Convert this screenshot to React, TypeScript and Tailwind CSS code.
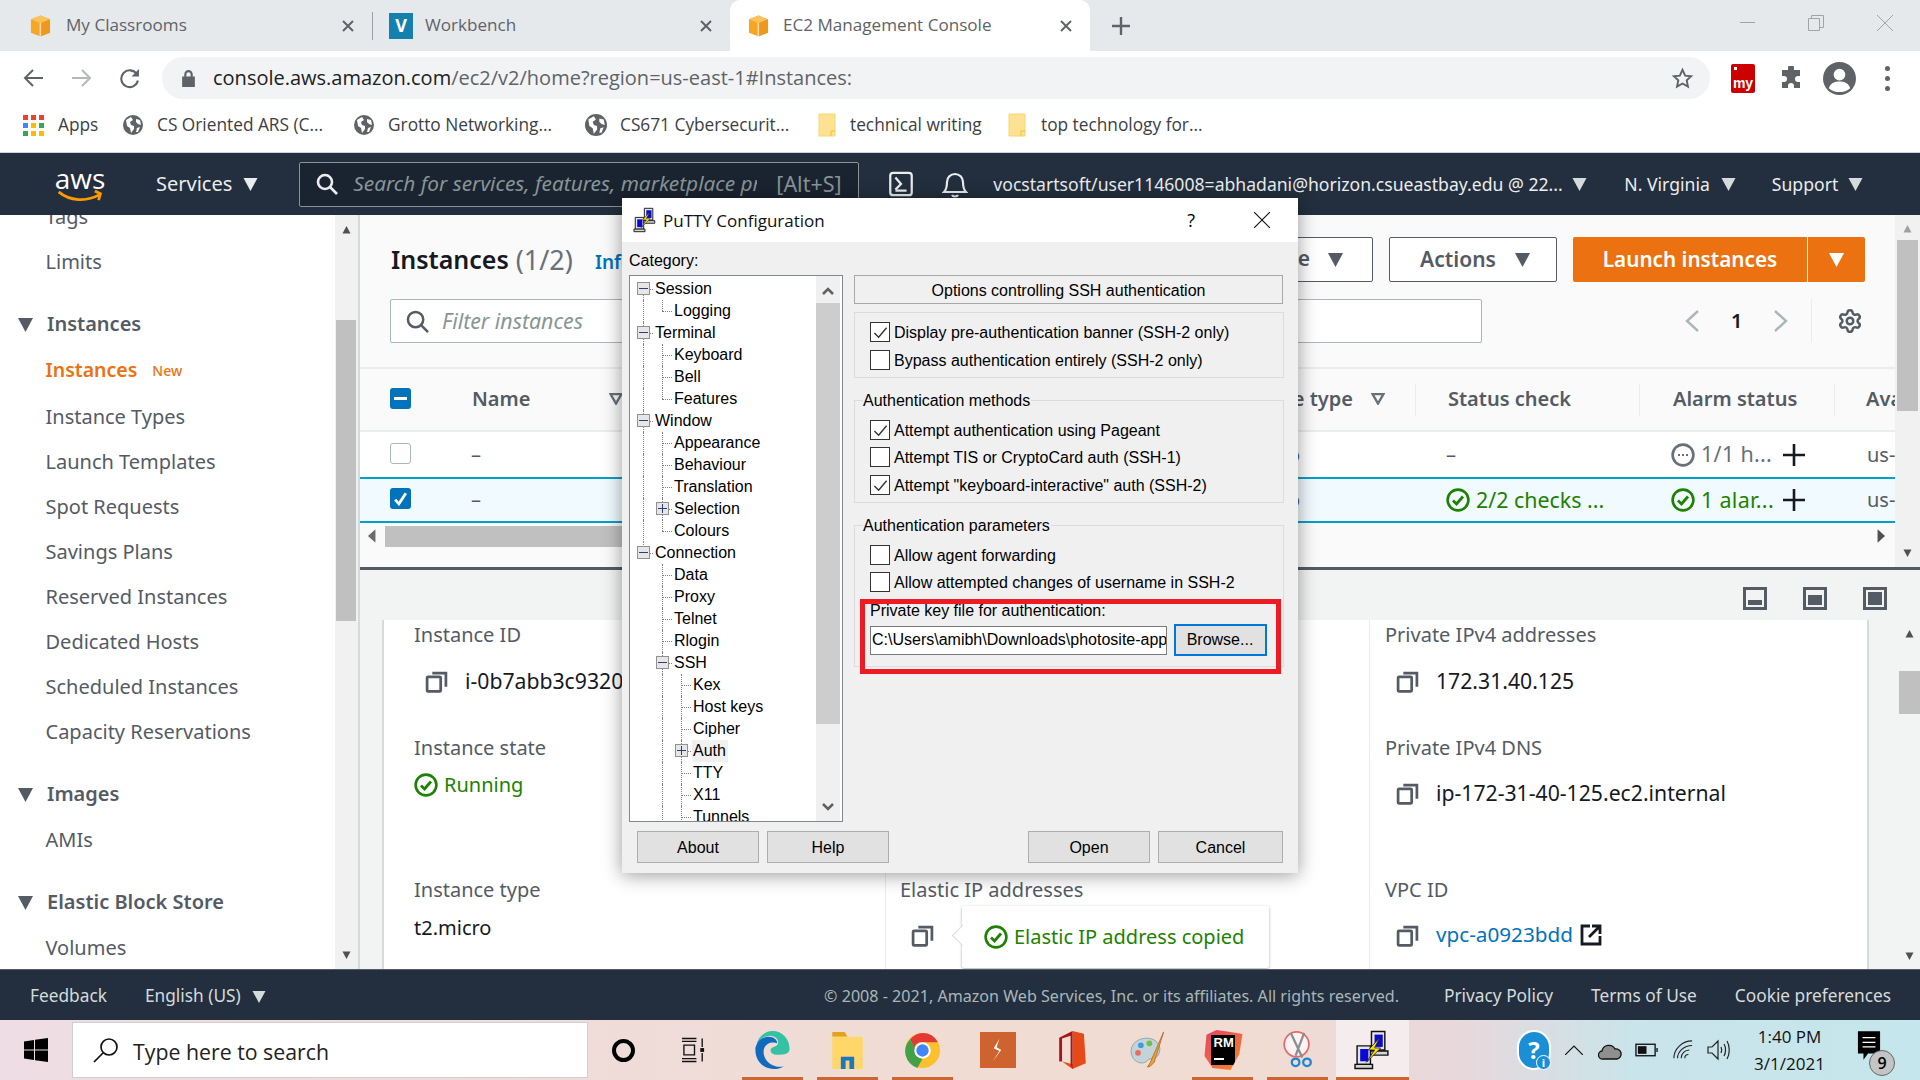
import type { ReactNode } from "react"
import { Settings } from "lucide-react"

function Caret({ className = "" }: { className?: string }) {
  return (
    <svg viewBox="0 0 14 14" className={"shrink-0 fill-current " + className}>
      <path d="M0 1h14L7 14z" />
    </svg>
  )
}

function AwsCube({ className = "" }: { className?: string }) {
  return (
    <svg viewBox="0 0 22 24" className={className}>
      <path d="M11 1 21 5v14l-10 4L1 19V5z" fill="#f5a623" />
      <path d="M11 1 21 5l-10 4L1 5z" fill="#f8c35d" />
      <path d="M11 9v14" stroke="#fff" strokeWidth="1.6" />
      <path d="M11 9 21 5v14l-10 4z" fill="#e8941a" opacity=".7" />
    </svg>
  )
}

function Globe({ className = "" }: { className?: string }) {
  return (
    <svg viewBox="0 0 20 20" className={className}>
      <circle cx="10" cy="10" r="10" fill="#5f6368" />
      <path d="M3 5l5-3 2 3-3 2 1 3 3 1 0 3-3 4-1-5-3-2zM13 4l4 1 1 5-3-1-2-2zM14 13l3-1-2 5-2 0z" fill="#fff" />
    </svg>
  )
}

function Folder({ className = "" }: { className?: string }) {
  return (
    <svg viewBox="0 0 18 24" className={className}>
      <path d="M1 1h16v22H1z" fill="#fde293" stroke="#f5d76e" />
      <path d="M13 23v-5h4" fill="none" stroke="#f1c232" />
    </svg>
  )
}

function CopyIcon({ className = "" }: { className?: string }) {
  return (
    <svg viewBox="0 0 22 22" className={"shrink-0 " + className} fill="none" stroke="#545b64" strokeWidth="2.6">
      <rect x="2" y="6.5" width="13" height="14" rx="1" />
      <path d="M7 3h13v13" />
    </svg>
  )
}

function CheckCircle({ className = "" }: { className?: string }) {
  return (
    <svg viewBox="0 0 24 24" className={"shrink-0 " + className} fill="none" stroke="#1d8102" strokeWidth="2.6">
      <circle cx="12" cy="12" r="10.4" />
      <path d="M7 12.5l3.5 3.5L17 8.5" strokeWidth="2.8" />
    </svg>
  )
}

function PlusMark() {
  return (
    <svg viewBox="0 0 22 22" className="w-[22px] h-[22px] shrink-0" stroke="#16191f" strokeWidth="2.6">
      <path d="M11 0v22M0 11h22" />
    </svg>
  )
}

function FilterCaret({ className = "" }: { className?: string }) {
  return (
    <svg viewBox="0 0 14 12" className={"w-[14px] h-[12px] shrink-0 " + className} fill="none" stroke="#687078" strokeWidth="2.4">
      <path d="M1.5 1h11L7 10.5z" />
    </svg>
  )
}

function PanelIcon({ kind }: { kind: "bottom" | "mid" | "full" }) {
  return (
    <svg viewBox="0 0 24 24" className="w-[24px] h-[24px]" fill="#545b64">
      <path d="M0 1h24v23H0zM3 4v17h18V4z" fillRule="evenodd" />
      {kind === "bottom" && <rect x="5" y="14" width="14" height="5" />}
      {kind === "mid" && <rect x="5" y="9" width="14" height="10" />}
      {kind === "full" && <rect x="5" y="6" width="14" height="13" />}
    </svg>
  )
}

function PuttyIcon({ className = "" }: { className?: string }) {
  return (
    <svg viewBox="0 0 36 40" className={className}>
      <path d="M17 2h13v18H17z" fill="#e6e6e6" stroke="#111" strokeWidth="1.4" />
      <path d="M20 5h8v12h-8z" fill="#0a0ad8" />
      <path d="M16 21h17v4H16z" fill="#d5d5d5" stroke="#111" strokeWidth="1.4" />
      <path d="M3 16h13v18H3z" fill="#e6e6e6" stroke="#111" strokeWidth="1.4" />
      <path d="M6 19h8v12H6z" fill="#0a0ad8" />
      <path d="M1 34h17v4H1z" fill="#d5d5d5" stroke="#111" strokeWidth="1.4" />
      <path d="M25 8 14 20l6 0-8 12 14-14-6 0z" fill="#f7e017" stroke="#222" strokeWidth=".8" />
    </svg>
  )
}

function Tab({ label, icon, width, active }: { label: string; icon: ReactNode; width: string; active?: boolean }) {
  return (
    <div className={`${width} h-full flex items-center shrink-0 ${active ? "bg-white rounded-t-[10px]" : ""}`}>
      {icon}
      <span className="text-[17.1px] text-[#5f6368] flex-1 -mt-[2px]">{label}</span>
      <svg viewBox="0 0 12 12" className="w-[12px] h-[12px] mr-[18px]" stroke="#5f6368" strokeWidth="2">
        <path d="M1 1l10 10M11 1 1 11" />
      </svg>
    </div>
  )
}

function Bookmark({ icon, label, width }: { icon: ReactNode; label: string; width: string }) {
  return (
    <div className={`${width} flex items-center shrink-0`}>
      {icon}
      <span className="text-[17.3px] text-[#3c4043] whitespace-nowrap">{label}</span>
    </div>
  )
}

function ChromeBar() {
  return (
    <>
      <div className="h-[51px] bg-[#e6e9ec] flex items-center font-['Open_Sans',sans-serif]">
        <Tab width="w-[372px] pl-[30px]" label="My Classrooms" icon={<AwsCube className="w-[21px] h-[24px] mr-[15px]" />} />
        <div className="w-px h-[28px] bg-[#9aa0a6] shrink-0" />
        <Tab
          width="w-[357px] pl-[16px]"
          label="Workbench"
          icon={
            <div className="w-[24px] h-[26px] bg-[#1380ad] mr-[12px] flex items-center justify-center text-white font-bold text-[18px]">V</div>
          }
        />
        <Tab width="w-[360px] pl-[18px]" active label="EC2 Management Console" icon={<AwsCube className="w-[21px] h-[24px] mr-[14px]" />} />
        <svg viewBox="0 0 18 18" className="w-[18px] h-[18px] ml-[22px]" stroke="#5f6368" strokeWidth="2.4">
          <path d="M9 0v18M0 9h18" />
        </svg>
        <div className="ml-auto flex items-center pr-[27px] -mt-[6px]">
          <div className="w-[15px] h-px bg-[#a0a4a8]" />
          <svg viewBox="0 0 16 16" className="w-[16px] h-[18px] ml-[53px]" fill="none" stroke="#a0a4a8">
            <path d="M.5 3.5h11v12H.5zM3.5 3.5v-3h12v12h-4" />
          </svg>
          <svg viewBox="0 0 16 16" className="w-[16px] h-[16px] ml-[53px]" stroke="#a0a4a8">
            <path d="M0 0l16 16M16 0 0 16" />
          </svg>
        </div>
      </div>

      <div className="h-[51px] bg-white flex items-center pt-[3px]">
        <svg viewBox="0 0 20 20" className="w-[20px] h-[20px] ml-[23px]" fill="none" stroke="#5f6368" strokeWidth="2">
          <path d="M20 10H2M10 2l-8 8 8 8" />
        </svg>
        <svg viewBox="0 0 20 20" className="w-[20px] h-[20px] ml-[29px]" fill="none" stroke="#b4b8bc" strokeWidth="2">
          <path d="M0 10h18M10 2l8 8-8 8" />
        </svg>
        <svg viewBox="0 0 20 20" className="w-[21px] h-[21px] ml-[27px]" fill="none" stroke="#5f6368" strokeWidth="2">
          <path d="M17 6a8 8 0 1 0 1 6" />
          <path d="M19 1v7h-7z" fill="#5f6368" stroke="none" />
        </svg>
        <div className="ml-[22px] w-[1548px] h-[42px] bg-[#f1f3f4] rounded-full flex items-center pl-[20px] pr-[16px]">
          <svg viewBox="0 0 12 16" className="w-[13px] h-[17px]" fill="#5f6368">
            <path d="M2 6V4a4 4 0 0 1 8 0v2h2v10H0V6zm2 0h4V4a2 2 0 0 0-4 0z" />
          </svg>
          <span className="ml-[18px] text-[20px] text-[#202124] font-['Open_Sans',sans-serif] whitespace-nowrap">
            console.aws.amazon.com<span className="text-[#5f6368]">/ec2/v2/home?region=us-east-1#Instances:</span>
          </span>
          <svg viewBox="0 0 24 24" className="w-[23px] h-[23px] ml-auto" fill="none" stroke="#5f6368" strokeWidth="2">
            <path d="M12 3l2.8 6 6.2.7-4.6 4.3 1.3 6.4L12 17.2l-5.7 3.2 1.3-6.4L3 9.7 9.2 9z" />
          </svg>
        </div>
        <div className="relative ml-[21px] w-[24px] h-[29px] bg-[#cc0000] rounded-[2px] flex items-end justify-center text-white text-[14px] font-bold leading-[20px] font-['Liberation_Sans',sans-serif]">
          <span className="absolute left-[3px] top-[3px] w-[3px] h-[3px] bg-white" />
          my
        </div>
        <svg viewBox="0 0 24 24" className="w-[24px] h-[24px] ml-[24px]" fill="#5f6368">
          <path d="M9 2a3 3 0 0 1 6 0v2h6v6h-2a3 3 0 0 0 0 6h2v6h-6v-2a3 3 0 0 0-6 0v2H3v-6h2a3 3 0 0 0 0-6H3V4h6z" />
        </svg>
        <svg viewBox="0 0 34 34" className="w-[33px] h-[33px] ml-[20px]">
          <circle cx="17" cy="17" r="17" fill="#5f6368" />
          <circle cx="17" cy="13" r="6" fill="#fff" />
          <path d="M6 27c2-6 7-7 11-7s9 1 11 7c-3 3-7 4-11 4s-8-1-11-4z" fill="#fff" />
        </svg>
        <div className="ml-[29px] flex flex-col gap-[5px]">
          <div className="w-[5px] h-[5px] rounded-full bg-[#5f6368]" />
          <div className="w-[5px] h-[5px] rounded-full bg-[#5f6368]" />
          <div className="w-[5px] h-[5px] rounded-full bg-[#5f6368]" />
        </div>
      </div>

      <div className="h-[51px] bg-white flex items-center pl-[23px] pb-[4px] font-['Open_Sans',sans-serif] border-b border-[#d0d3d6]">
        <Bookmark
          width="w-[100px]"
          label="Apps"
          icon={
            <div className="grid grid-cols-3 gap-[3px] mr-[14px]">
              {["#ea4335", "#ea4335", "#ea4335", "#4285f4", "#fbbc04", "#34a853", "#34a853", "#fbbc04", "#fbbc04"].map((c, i) => (
                <div key={i} className="w-[5px] h-[5px]" style={{ background: c }} />
              ))}
            </div>
          }
        />
        <Bookmark width="w-[231px]" label="CS Oriented ARS (C..." icon={<Globe className="w-[20px] h-[20px] mr-[14px]" />} />
        <Bookmark width="w-[231px]" label="Grotto Networking..." icon={<Globe className="w-[20px] h-[20px] mr-[14px]" />} />
        <Bookmark width="w-[233px]" label="CS671 Cybersecurit..." icon={<Globe className="w-[22px] h-[22px] mr-[13px]" />} />
        <Bookmark width="w-[190px]" label="technical writing" icon={<Folder className="w-[18px] h-[24px] mr-[14px]" />} />
        <Bookmark width="w-[200px]" label="top technology for..." icon={<Folder className="w-[18px] h-[24px] mr-[15px]" />} />
      </div>
    </>
  )
}

function AwsHeader() {
  return (
    <div className="h-[62px] bg-[#232f3e] flex items-center text-[#eaeded] text-[17.6px] font-['Noto_Sans',sans-serif] shrink-0">
      <div className="ml-[55px] w-[50px] flex flex-col items-center">
        <span className="text-[28px] leading-[24px] text-white font-['Open_Sans',sans-serif]">aws</span>
        <svg viewBox="0 0 50 14" className="w-[50px] h-[13px]" fill="none" stroke="#f90" strokeWidth="3">
          <path d="M2 2c12 10 30 11 44 3M41 1l6 3-2 7" />
        </svg>
      </div>
      <span className="ml-[51px] text-[20px]">Services</span>
      <Caret className="w-[15px] h-[14px] ml-[11px] text-[#eaeded]" />
      <div className="ml-[41px] w-[560px] h-[45px] bg-[#1a2330] border border-[#879596] rounded-[2px] flex items-center pl-[16px] text-[#879596]">
        <svg viewBox="0 0 22 22" className="w-[22px] h-[22px] shrink-0" fill="none" stroke="#eaeded" strokeWidth="2.6">
          <circle cx="9" cy="9" r="7" />
          <path d="M14 14l7 7" />
        </svg>
        <span className="ml-[15px] w-[404px] overflow-hidden whitespace-nowrap italic text-[20.8px]">Search for services, features, marketplace products, and docs</span>
        <span className="ml-[19px] text-[21.5px]">[Alt+S]</span>
      </div>
      <svg viewBox="0 0 26 30" className="w-[26px] h-[28px] ml-[29px]" fill="none" stroke="#eaeded" strokeWidth="2.4">
        <rect x="1.5" y="3" width="23" height="24" rx="3" />
        <path d="M7 8l6 7-6 6M7 22h12" />
      </svg>
      <svg viewBox="0 0 26 28" className="w-[26px] h-[28px] ml-[28px]" fill="none" stroke="#eaeded" strokeWidth="2.2">
        <path d="M2 22c3-3 3-6 3-10a8 8 0 0 1 16 0c0 4 0 7 3 10z" />
        <path d="M10 25c1 2 5 2 6 0" />
      </svg>
      <span className="ml-[25px] whitespace-nowrap w-[569px]">vocstartsoft/user1146008=abhadani@horizon.csueastbay.edu @ 22...</span>
      <Caret className="w-[15px] h-[14px] ml-[10px] text-[#d5dbdb]" />
      <span className="ml-[37px]">N. Virginia</span>
      <Caret className="w-[15px] h-[14px] ml-[11px] text-[#d5dbdb]" />
      <span className="ml-[36px]">Support</span>
      <Caret className="w-[15px] h-[14px] ml-[10px] text-[#d5dbdb]" />
    </div>
  )
}

function SideItem({ children, className = "h-[45px]" }: { children: ReactNode; className?: string }) {
  return <div className={"flex items-center pl-[45.5px] text-[20px] text-[#545b64] whitespace-nowrap " + className}>{children}</div>
}

function SideHead({ children }: { children: ReactNode }) {
  return (
    <div className="mt-[17px] h-[46px] flex items-center pl-[18px] text-[20px] font-semibold text-[#545b64]">
      <Caret className="w-[15px] h-[15px] mr-[14px] text-[#545b64]" />
      {children}
    </div>
  )
}

function Sidebar() {
  return (
    <div className="w-[360px] h-full shrink-0 flex bg-white overflow-hidden">
      <div className="w-[335px] h-full -mt-[21px]">
        <SideItem>Tags</SideItem>
        <SideItem>Limits</SideItem>
        <SideHead>Instances</SideHead>
        <SideItem className="h-[47px]">
          <span className="text-[#ec7211] font-semibold text-[19.5px] -mt-[1px]">Instances</span>
          <span className="ml-[15px] text-[#ec7211] text-[14px] font-medium">New</span>
        </SideItem>
        <SideItem>Instance Types</SideItem>
        <SideItem>Launch Templates</SideItem>
        <SideItem>Spot Requests</SideItem>
        <SideItem>Savings Plans</SideItem>
        <SideItem>Reserved Instances</SideItem>
        <SideItem>Dedicated Hosts</SideItem>
        <SideItem>Scheduled Instances</SideItem>
        <SideItem>Capacity Reservations</SideItem>
        <SideHead>Images</SideHead>
        <SideItem>AMIs</SideItem>
        <SideHead>Elastic Block Store</SideHead>
        <SideItem>Volumes</SideItem>
      </div>
      <div className="w-[25px] h-[754px] bg-[#f1f1f1] border-r-2 border-[#d5dbdb] flex flex-col items-center pt-[11px] pr-[1px]">
        <Caret className="w-[11px] h-[8px] rotate-180 text-[#505050]" />
        <div className="w-[20px] h-[301px] bg-[#c0c0c0] mt-[86px]" />
        <Caret className="w-[11px] h-[8px] mt-auto mb-[10px] text-[#505050]" />
      </div>
    </div>
  )
}

function TableHeadCell({ children, className = "" }: { children: ReactNode; className?: string }) {
  return <div className={"h-[32px] flex items-center text-[20px] font-semibold text-[#545b64] border-r border-[#eaeded] shrink-0 pb-[2px] " + className}>{children}</div>
}

function TopPane() {
  return (
    <div className="h-[352px] flex bg-[#fafafa] shrink-0">
      <div className="w-[1535px] h-full overflow-hidden">
        <div className="h-[84px] flex items-center pl-[31px] pt-[4px]">
          <span className="text-[25px] font-semibold text-[#16191f] mt-[2px]">Instances</span>
          <span className="text-[27px] text-[#687078] ml-[7px] mt-[2px]">(1/2)</span>
          <span className="text-[19px] font-semibold text-[#0073bb] ml-[22px] mt-[6px]">Info</span>
          <div className="ml-auto w-[190px] h-[45px] mr-[16px] border border-[#545b64] rounded-[2px] bg-white flex items-center justify-end pr-[29px] text-[21px] font-semibold text-[#545b64] whitespace-nowrap">
            Instance state
            <Caret className="w-[15px] h-[15px] ml-[18px] text-[#545b64]" />
          </div>
          <div className="w-[168px] h-[45px] mr-[16px] pl-[4px] pt-[1px] border border-[#545b64] rounded-[2px] bg-white flex items-center justify-center text-[21px] font-semibold text-[#545b64]">
            Actions
            <Caret className="w-[15px] h-[15px] ml-[19px] text-[#545b64]" />
          </div>
          <div className="w-[292px] h-[45px] mr-[30px] rounded-[2px] bg-[#ec7211] flex items-center text-[20.7px] font-semibold text-white">
            <span className="w-[235px] text-center border-r border-white leading-[45px]">Launch instances</span>
            <Caret className="w-[15px] h-[15px] ml-[21px] text-white" />
          </div>
        </div>
        <div className="h-[44px] flex items-center pl-[30px]">
          <div className="w-[1092px] h-[44px] bg-white border border-[#aab7b8] rounded-[2px] flex items-center pl-[15px]">
            <svg viewBox="0 0 24 24" className="w-[23px] h-[23px]" fill="none" stroke="#545b64" strokeWidth="2.6">
              <circle cx="10" cy="10" r="8" />
              <path d="M16 16l7 7" />
            </svg>
            <span className="ml-[13px] text-[21.3px] italic text-[#879596]">Filter instances</span>
          </div>
          <svg viewBox="0 0 14 22" className="w-[14px] h-[22px] ml-[203px]" fill="none" stroke="#aab7b8" strokeWidth="2.4">
            <path d="M13 1 2 11l11 10" />
          </svg>
          <span className="ml-[32px] text-[20px] font-semibold text-[#16191f]">1</span>
          <svg viewBox="0 0 14 22" className="w-[14px] h-[22px] ml-[32px]" fill="none" stroke="#aab7b8" strokeWidth="2.4">
            <path d="M1 1l11 10L1 21" />
          </svg>
          <div className="w-px h-[44px] bg-[#eaeded] ml-[23px]" />
          <Settings className="w-[26px] h-[26px] ml-[25px] text-[#545b64]" strokeWidth={2.3} />
        </div>
        <div className="mt-[24px] h-[65px] border-t-2 border-b-2 border-[#eaeded] flex items-center">
          <div className="w-[81px] shrink-0 pl-[30px] pb-[2px]">
            <div className="w-[21px] h-[21px] bg-[#0073bb] rounded-[3px] flex items-center justify-center">
              <div className="w-[13px] h-[3px] bg-white" />
            </div>
          </div>
          <div className="w-px h-[32px] bg-[#eaeded] -ml-px" />
          <TableHeadCell className="w-[199px] pl-[32px] border-none">
            Name
            <FilterCaret className="ml-[79px]" />
          </TableHeadCell>
          <TableHeadCell className="w-[777px] justify-end pr-[30px]">
            Instance type
            <FilterCaret className="ml-[18px]" />
          </TableHeadCell>
          <TableHeadCell className="w-[224px] pl-[32px]">Status check</TableHeadCell>
          <TableHeadCell className="w-[195px] pl-[33px]">Alarm status</TableHeadCell>
          <TableHeadCell className="pl-[31px] border-none">Availability Zone</TableHeadCell>
        </div>
        <div className="h-[45px] bg-white flex items-center text-[20px] text-[#545b64] whitespace-nowrap">
          <div className="w-[81px] shrink-0 pl-[30px] pb-[2px]">
            <div className="w-[21px] h-[21px] border border-[#aab7b8] rounded-[3px] bg-white" />
          </div>
          <span className="w-[200px] shrink-0 pl-[30px]">–</span>
          <span className="w-[776px] shrink-0 pr-[117px] text-right">t2.micro</span>
          <span className="w-[224px] shrink-0 pl-[29px]">–</span>
          <div className="w-[195px] shrink-0 pl-[30px] flex items-center">
            <svg viewBox="0 0 24 24" className="w-[24px] h-[24px] shrink-0" fill="none" stroke="#687078" strokeWidth="2.6">
              <circle cx="12" cy="12" r="10.4" />
              <path d="M7 12h10" strokeDasharray="2 2" strokeWidth="2.2" />
            </svg>
            <span className="ml-[6px] w-[82px] text-[#687078] text-[21.5px] tracking-[0.3px]">1/1 h...</span>
            <PlusMark />
          </div>
          <span className="pl-[31px]">us-east-1a</span>
        </div>
        <div className="h-[46px] bg-[#f1faff] border-y-2 border-[#00a1c9] flex items-center text-[20px] text-[#545b64] whitespace-nowrap">
          <div className="w-[81px] shrink-0 pl-[30px] pb-[3px]">
            <div className="w-[21px] h-[21px] bg-[#0073bb] rounded-[3px] flex items-center justify-center">
              <svg viewBox="0 0 14 14" className="w-[15px] h-[15px]" fill="none" stroke="#fff" strokeWidth="2.6">
                <path d="M2 8l3.5 4L12 2" />
              </svg>
            </div>
          </div>
          <span className="w-[200px] shrink-0 pl-[30px]">–</span>
          <span className="w-[776px] shrink-0 pr-[117px] text-right">t2.micro</span>
          <div className="w-[224px] shrink-0 pl-[29px] flex items-center text-[#1d8102]">
            <CheckCircle className="w-[24px] h-[24px]" />
            <span className="ml-[6px] text-[21.4px]">2/2 checks ...</span>
          </div>
          <div className="w-[195px] shrink-0 pl-[30px] flex items-center text-[#1d8102]">
            <CheckCircle className="w-[24px] h-[24px]" />
            <span className="ml-[6px] w-[82px] text-[21.5px] tracking-[0.3px]">1 alar...</span>
            <PlusMark />
          </div>
          <span className="pl-[31px]">us-east-1a</span>
        </div>
        <div className="h-[22px] mt-[2px] flex items-center">
          <Caret className="w-[8px] h-[14px] ml-[8px] text-[#6c6c6c] rotate-90 scale-x-[1.7]" />
          <div className="w-[700px] h-[21px] ml-[9px] bg-[#c0c0c0]" />
          <Caret className="w-[8px] h-[14px] ml-auto mr-[10px] text-[#505050] -rotate-90 scale-x-[1.7]" />
        </div>
      </div>
      <div className="w-[25px] h-full bg-[#f1f1f1] flex flex-col items-center pt-[10px]">
        <Caret className="w-[11px] h-[8px] rotate-180 text-[#a0a0a0]" />
        <div className="w-[21px] h-[171px] bg-[#c0c0c0] mt-[7px]" />
        <Caret className="w-[11px] h-[8px] mt-auto mb-[10px] text-[#505050]" />
      </div>
    </div>
  )
}

function Label({ children }: { children: ReactNode }) {
  return <div className="h-[30px] flex items-center text-[20px] text-[#545b64] whitespace-nowrap">{children}</div>
}

function CopyValue({ children }: { children: ReactNode }) {
  return (
    <div className="flex items-center h-[30px] pl-[11px] text-[21.2px] text-[#16191f] whitespace-nowrap">
      <CopyIcon className="w-[23px] h-[23px] mr-[17px]" />
      {children}
    </div>
  )
}

function DetailPane() {
  return (
    <div className="flex-1 min-h-0 bg-[#f2f3f3] border-t-[3px] border-[#545b64] flex flex-col">
      <div className="h-[50px] flex items-start justify-end pt-[16px] pr-[33px] gap-[36px] shrink-0">
        <PanelIcon kind="bottom" />
        <PanelIcon kind="mid" />
        <PanelIcon kind="full" />
      </div>
      <div className="flex-1 min-h-0 pl-[22px] flex">
        <div className="w-[1491px] h-full bg-white border-x-2 border-[#d5dbdb] grid grid-cols-[501px_484px_1fr]">
          <div className="pl-[30px]">
            <Label>Instance ID</Label>
            <div className="mt-[16px]">
              <CopyValue>i-0b7abb3c93201f2c4</CopyValue>
            </div>
            <div className="mt-[37px]">
              <Label>Instance state</Label>
            </div>
            <div className="mt-[7px] flex items-center h-[30px] text-[20px] text-[#1d8102]">
              <CheckCircle className="w-[24px] h-[24px] mr-[6px]" />
              Running
            </div>
            <div className="mt-[75px]">
              <Label>Instance type</Label>
            </div>
            <div className="mt-[8px] h-[30px] flex items-center text-[20px] text-[#16191f]">t2.micro</div>
          </div>
          <div className="border-l border-[#eaeded] pl-[14px] pt-[255px] relative">
            <Label>Elastic IP addresses</Label>
            <div className="mt-[15px]">
              <CopyValue>
                <span />
              </CopyValue>
            </div>
            {/* copied popover */}
            <div className="absolute left-[76px] top-[286px] w-[307px] h-[62px] bg-white rounded-[2px] shadow-[0_1px_3px_rgba(0,0,0,0.35)] flex items-center pl-[22px] text-[20px] text-[#1d8102] whitespace-nowrap">
              <div className="absolute -left-[7px] top-[22px] w-[15px] h-[15px] bg-white rotate-45 border-l border-b border-[#d5dbdb]" />
              <CheckCircle className="w-[24px] h-[24px] mr-[6px] relative" />
              Elastic IP address copied
            </div>
          </div>
          <div className="border-l border-[#eaeded] pl-[15px]">
            <Label>Private IPv4 addresses</Label>
            <div className="mt-[16px]">
              <CopyValue>172.31.40.125</CopyValue>
            </div>
            <div className="mt-[37px]">
              <Label>Private IPv4 DNS</Label>
            </div>
            <div className="mt-[15px]">
              <CopyValue>ip-172-31-40-125.ec2.internal</CopyValue>
            </div>
            <div className="mt-[67px]">
              <Label>VPC ID</Label>
            </div>
            <div className="mt-[15px]">
              <CopyValue>
                <span className="text-[#0073bb] text-[20.7px]">vpc-a0923bdd</span>
                <svg viewBox="0 0 22 22" className="w-[22px] h-[22px] ml-[7px]" fill="none" stroke="#16191f" strokeWidth="2.8">
                  <path d="M10 2H2v18h18v-8M9 13 19 3M12 2h8v8" />
                </svg>
              </CopyValue>
            </div>
          </div>
        </div>
        <div className="flex-1 flex flex-col items-center pl-[30px] pt-[10px]">
          <Caret className="w-[11px] h-[8px] rotate-180 text-[#505050]" />
          <div className="w-[21px] h-[43px] bg-[#c0c0c0] mt-[33px]" />
          <Caret className="w-[11px] h-[8px] mt-auto mb-[9px] text-[#505050]" />
        </div>
      </div>
    </div>
  )
}

function AwsFooter() {
  return (
    <div className="h-[51px] bg-[#232f3e] border-t border-[#545b64] flex items-center pt-[2px] text-[17.3px] text-[#d5dbdb] font-['Noto_Sans',sans-serif] shrink-0 whitespace-nowrap">
      <span className="ml-[30px]">Feedback</span>
      <span className="ml-[38px]">English (US)</span>
      <Caret className="w-[14px] h-[13px] ml-[11px]" />
      <span className="ml-auto text-[#aab7b8] text-[16.1px]">© 2008 - 2021, Amazon Web Services, Inc. or its affiliates. All rights reserved.</span>
      <span className="ml-[45px]">Privacy Policy</span>
      <span className="ml-[38px]">Terms of Use</span>
      <span className="ml-[38px] mr-[29px]">Cookie preferences</span>
    </div>
  )
}

// tree rows: label, ancestor guide lines, expander
type TreeNode = {
  label: string
  guides: boolean[]
  exp?: "minus" | "plus"
  end?: boolean
  first?: boolean
  selected?: boolean
}

const treeNodes: TreeNode[] = [
  { label: "Session", guides: [], exp: "minus", first: true },
  { label: "Logging", guides: [true], end: true },
  { label: "Terminal", guides: [], exp: "minus" },
  { label: "Keyboard", guides: [true] },
  { label: "Bell", guides: [true] },
  { label: "Features", guides: [true], end: true },
  { label: "Window", guides: [], exp: "minus" },
  { label: "Appearance", guides: [true] },
  { label: "Behaviour", guides: [true] },
  { label: "Translation", guides: [true] },
  { label: "Selection", guides: [true], exp: "plus" },
  { label: "Colours", guides: [true], end: true },
  { label: "Connection", guides: [], exp: "minus", end: true },
  { label: "Data", guides: [false] },
  { label: "Proxy", guides: [false] },
  { label: "Telnet", guides: [false] },
  { label: "Rlogin", guides: [false] },
  { label: "SSH", guides: [false], exp: "minus" },
  { label: "Kex", guides: [false, true] },
  { label: "Host keys", guides: [false, true] },
  { label: "Cipher", guides: [false, true] },
  { label: "Auth", guides: [false, true], exp: "plus", selected: true },
  { label: "TTY", guides: [false, true] },
  { label: "X11", guides: [false, true] },
  { label: "Tunnels", guides: [false, true] },
]

function TreeRow({ node }: { node: TreeNode }) {
  return (
    <div className="h-[22px] flex items-center pl-[13px] shrink-0">
      {node.guides.map((g, i) => (
        <span key={i} className={`w-[19px] h-full shrink-0 ${g ? "border-l border-dotted border-[#808080]" : ""}`} />
      ))}
      <span className="relative w-[12px] h-full shrink-0">
        <span
          className={`absolute left-0 border-l border-dotted border-[#808080] ${
            node.first ? "top-1/2 bottom-0" : node.end ? "top-0 h-1/2" : "inset-y-0"
          }`}
        />
        <span className="absolute left-0 top-1/2 w-[10px] border-t border-dotted border-[#808080]" />
        {node.exp && (
          <span className="absolute -left-[6px] top-[4px] w-[13px] h-[13px] bg-[#e6e6e6] border border-[#919191] flex items-center justify-center">
            <span className="w-[9px] h-px bg-[#2b3f73]" />
            {node.exp === "plus" && <span className="absolute w-px h-[9px] bg-[#2b3f73]" />}
          </span>
        )}
      </span>
      <span className={`text-[16px] text-black leading-[22px] ${node.selected ? "bg-[#f0f0f0] -ml-px pl-px pr-[2px]" : ""}`}>{node.label}</span>
    </div>
  )
}

function Check({ label, checked }: { label: string; checked?: boolean }) {
  return (
    <div className="flex items-center h-[20px] pl-[15px] whitespace-nowrap">
      <span className="w-[20px] h-[20px] bg-white border border-[#333] flex items-center justify-center shrink-0">
        {checked && (
          <svg viewBox="0 0 16 16" className="w-[15px] h-[15px]" fill="none" stroke="#333" strokeWidth="1.5">
            <path d="M1.5 8.5 6 13 14.5 3" />
          </svg>
        )}
      </span>
      <span className="ml-[4px] mt-[2px]">{label}</span>
    </div>
  )
}

function GroupBox({ label, className, children }: { label?: string; className: string; children: ReactNode }) {
  return (
    <div className={"relative border border-[#dcdcdc] w-[430px] " + className}>
      {label && <span className="absolute left-[8px] -top-[10px] h-[20px] leading-[20px] bg-[#f0f0f0] pr-[1px]">{label}</span>}
      {children}
    </div>
  )
}

function WinButton({ label, className }: { label: string; className: string }) {
  return <div className={"h-[32px] bg-[#e1e1e1] border border-[#adadad] flex items-center justify-center shrink-0 pt-[2px] " + className}>{label}</div>
}

function PuttyDialog() {
  return (
    <div className="absolute left-[622px] top-[198px] w-[676px] h-[675px] bg-[#f0f0f0] shadow-[0_2px_18px_rgba(0,0,0,0.4)] flex flex-col font-['Liberation_Sans',sans-serif] text-[16px] text-black">
      <div className="h-[44px] bg-white flex items-center shrink-0 pl-[11px]">
        <PuttyIcon className="w-[24px] h-[26px]" />
        <span className="ml-[6px] mt-[1px] text-[17px] font-['Open_Sans',sans-serif] text-[#111]">PuTTY Configuration</span>
        <span className="ml-auto text-[18px] font-['Open_Sans',sans-serif]">?</span>
        <svg viewBox="0 0 16 16" className="w-[16px] h-[16px] ml-[59px] mr-[28px]" stroke="#111" strokeWidth="1.1">
          <path d="M0 0l16 16M16 0 0 16" />
        </svg>
      </div>

      <div className="h-[580px] flex shrink-0">
        <div className="w-[232px] pl-[7px] shrink-0">
          <div className="h-[33px] flex items-center pt-[5px]">Category:</div>
          <div className="w-[214px] h-[547px] bg-white border border-[#828790] flex overflow-hidden">
            <div className="w-[186px] h-full overflow-hidden pt-[2px] flex flex-col shrink-0">
              {treeNodes.map((n) => (
                <TreeRow key={n.label} node={n} />
              ))}
            </div>
            <div className="w-[24px] h-full bg-[#f0f0f0] flex flex-col items-center pt-[11px]">
              <svg viewBox="0 0 12 8" className="w-[12px] h-[8px]" fill="none" stroke="#606060" strokeWidth="2.5">
                <path d="M1 7l5-5 5 5" />
              </svg>
              <div className="w-full h-[421px] bg-[#cdcdcd] mt-[8px]" />
              <svg viewBox="0 0 12 8" className="w-[12px] h-[8px] mt-auto mb-[10px]" fill="none" stroke="#606060" strokeWidth="2.5">
                <path d="M1 1l5 5 5-5" />
              </svg>
            </div>
          </div>
        </div>
        <div className="relative pt-[33px] flex flex-col">
          <div className="w-[429px] h-[29px] border border-[#a8a8a8] flex items-center justify-center pt-[2px]">Options controlling SSH authentication</div>
          <GroupBox className="mt-[8px] h-[66px] pt-[9px] flex flex-col gap-[8px]">
            <Check checked label="Display pre-authentication banner (SSH-2 only)" />
            <Check label="Bypass authentication entirely (SSH-2 only)" />
          </GroupBox>
          <GroupBox label="Authentication methods" className="mt-[22px] h-[103px] pt-[19px] flex flex-col gap-[7px]">
            <Check checked label="Attempt authentication using Pageant" />
            <Check label="Attempt TIS or CryptoCard auth (SSH-1)" />
            <div className="mt-[1px]">
              <Check checked label={'Attempt "keyboard-interactive" auth (SSH-2)'} />
            </div>
          </GroupBox>
          <GroupBox label="Authentication parameters" className="mt-[22px] h-[142px] pt-[19px] flex flex-col gap-[7px]">
            <Check label="Allow agent forwarding" />
            <Check label="Allow attempted changes of username in SSH-2" />
            <div className="pl-[15px] mt-[2px] h-[20px] leading-[20px] whitespace-nowrap">Private key file for authentication:</div>
            <div className="pl-[15px] -mt-[4px] flex items-center">
              <div className="w-[297px] h-[29px] bg-white border border-[#7a7a7a] pl-[1px] pr-[3px] leading-[26px] overflow-hidden whitespace-nowrap shrink-0">C:\Users\amibh\Downloads\photosite-app.ppk</div>
              <div className="ml-[7px] w-[93px] h-[32px] bg-[#e1e1e1] border-2 border-[#0078d7] flex items-center justify-center pr-[1px]">Browse...</div>
            </div>
          </GroupBox>
          {/* red annotation from the screenshot */}
          <div className="absolute left-[6px] top-[357px] w-[421px] h-[75px] border-[5px] border-[#ed1c24]" />
        </div>
      </div>

      <div className="mt-[9px] pl-[15px] flex">
        <WinButton label="About" className="w-[122px]" />
        <WinButton label="Help" className="w-[122px] ml-[8px]" />
        <WinButton label="Open" className="w-[122px] ml-[139px]" />
        <WinButton label="Cancel" className="w-[125px] ml-[8px]" />
      </div>
    </div>
  )
}

function Slot({ children, active, running }: { children: ReactNode; active?: boolean; running?: boolean }) {
  return (
    <div className={`h-full flex items-center justify-center shrink-0 relative ${active ? "w-[73px] bg-[#f5eded] -ml-[6px]" : "w-[61px]"}`}>
      {children}
      {running && <div className="absolute bottom-0 inset-x-0 h-[3px] bg-[#cc6530]" />}
    </div>
  )
}

function Taskbar() {
  return (
    <div className="h-[60px] shrink-0 flex items-stretch bg-[linear-gradient(90deg,#eedde4_0%,#f0dcd3_50%,#f0dcd3_66%,#e8d8dc_76%,#c9e4ea_85%,#c5e6ec_100%)] font-['Open_Sans',sans-serif]">
      <div className="w-[72px] flex items-center justify-center shrink-0">
        <svg viewBox="0 0 24 24" className="w-[24px] h-[24px]" fill="#000">
          <path d="M0 3.5 10 2v9.500H0zM11 1.800 24 0v11.500H11zM0 12.500h10V22L0 20.500zM11 12.500h13V24l-13-1.800z" />
        </svg>
      </div>
      <div className="w-[516px] my-[2px] bg-white border border-[#cfcfcf] flex items-center pl-[20px] shrink-0">
        <svg viewBox="0 0 26 26" className="w-[26px] h-[26px]" fill="none" stroke="#111" strokeWidth="1.7">
          <circle cx="16" cy="10" r="8" />
          <path d="M10 16 1 25" />
        </svg>
        <span className="ml-[14px] mt-[3px] text-[21.3px] text-[#222]">Type here to search</span>
      </div>
      <div className="ml-[24px] w-[24px] flex items-center shrink-0">
        <div className="w-[23px] h-[23px] rounded-full border-[4px] border-black" />
      </div>
      <div className="ml-[46px] w-[28px] flex items-center shrink-0">
        <svg viewBox="0 0 26 28" className="w-[25px] h-[28px]" fill="none" stroke="#111" strokeWidth="1.4">
          <path d="M0 2h15M0 5h15M0 23h15M0 26h15M2 9h11v10H2zM21 2v9M21 17v9" />
          <rect x="19" y="12" width="4" height="4" fill="#111" stroke="none" />
        </svg>
      </div>
      <div className="ml-[32px] flex gap-[14px] items-stretch">
        <Slot running>
          <svg viewBox="0 0 36 40" className="w-[37px] h-[38px]">
            <path d="M18 0c10 0 18 8 18 19 0 5-6 6-12 6-6 0-8-2-8-5 0-4 8-3 8-8 0-4-4-7-9-7S3 9 1 15C3 6 10 0 18 0z" fill="#35c1a3" />
            <path d="M1 15C3 9 9 6 14 6s9 3 9 7c-4-2-12-1-14 6-2 8 4 16 12 18 3 1 6 1 9 0-3 2-7 3-11 3C8 40 0 31 0 20c0-2 0-3 1-5z" fill="#0f6bbd" />
          </svg>
        </Slot>
        <Slot running>
          <svg viewBox="0 0 34 40" className="w-[33px] h-[38px]">
            <path d="M1 1h13l3 5H1z" fill="#e3a21a" />
            <path d="M1 6h32v34H1z" fill="#ffd668" />
            <path d="M10 40V27h14v13h-5V31h-4v9z" fill="#1976c8" />
          </svg>
        </Slot>
        <Slot running>
          <svg viewBox="0 0 34 34" className="w-[35px] h-[35px]">
            <circle cx="17" cy="17" r="17" fill="#fbc02d" />
            <path d="M17 0a17 17 0 0 1 15 9H17a8 8 0 0 0-8 5L5 6a17 17 0 0 1 12-6z" fill="#e53935" />
            <path d="M5 6l8 15 4 4-5 9A17 17 0 0 1 5 6z" fill="#43a047" />
            <circle cx="17" cy="17" r="8" fill="#fff" />
            <circle cx="17" cy="17" r="6" fill="#4285f4" />
          </svg>
        </Slot>
        <Slot>
          <div className="w-[36px] h-[36px] bg-[#cf6330] flex items-center justify-center">
            <svg viewBox="0 0 14 24" className="w-[13px] h-[24px]" fill="#fff">
              <path d="M9 0 3 10l6 3-7 11 9-12-5-3z" />
            </svg>
          </div>
        </Slot>
        <Slot>
          <svg viewBox="0 0 28 40" className="w-[27px] h-[38px]">
            <path d="M14 0 26 3 28 34 14 40 3 32 14 35z" fill="#e64a19" />
            <path d="M14 0 0 7v25l3 0 0-24 9-3 0 30 2 5 0-40z" fill="#a4161a" />
          </svg>
        </Slot>
        <Slot>
          <svg viewBox="0 0 38 40" className="w-[37px] h-[38px]">
            <path d="M2 24C0 12 12 6 22 8c8 2 12 8 9 16-3 7-8 3-12 7-4 5-15 3-17-7z" fill="#c3d3da" stroke="#8fa3ad" />
            <circle cx="12" cy="15" r="3" fill="#3f9ddc" />
            <circle cx="21" cy="13" r="3" fill="#6fbf4a" />
            <circle cx="9" cy="23" r="3" fill="#e96a5f" />
            <path d="M36 1 22 33l-3 5 3-1 4-4z" fill="#e9a23b" stroke="#b9722a" />
          </svg>
        </Slot>
        <Slot running>
          <div className="relative w-[40px] h-[40px] bg-[linear-gradient(135deg,#e83e6d,#f58a1f)] [clip-path:polygon(10%_12%,35%_0,70%_5%,100%_10%,92%_60%,70%_100%,25%_95%,5%_65%)] flex items-center justify-center">
            <div className="w-[24px] h-[30px] bg-black text-white text-[13px] font-bold leading-[16px] pl-[3px] font-['Liberation_Sans',sans-serif]">
              RM
              <div className="w-[10px] h-[2px] bg-white mt-[7px]" />
            </div>
          </div>
        </Slot>
        <Slot running>
          <svg viewBox="0 0 38 40" className="w-[37px] h-[38px]" fill="none">
            <circle cx="18" cy="14" r="13" stroke="#e66a6a" strokeWidth="1.8" fill="#fdf3f3" />
            <path d="M12 2 24 28M26 2 17 26" stroke="#8a8f95" strokeWidth="2.4" />
            <circle cx="17" cy="33" r="4" stroke="#1c86d1" strokeWidth="2.4" />
            <circle cx="29" cy="33" r="4" stroke="#1c86d1" strokeWidth="2.4" />
          </svg>
        </Slot>
        <Slot active running>
          <PuttyIcon className="w-[37px] h-[42px]" />
        </Slot>
      </div>
      <div className="ml-[108px] w-[34px] flex items-center shrink-0">
        <div className="relative w-[34px] h-[40px] rounded-full bg-white flex items-center justify-center">
          <div className="w-[30px] h-[36px] rounded-full bg-[#1a8fd6] text-white text-[24px] font-bold flex items-center justify-center">?</div>
          <div className="absolute right-0 bottom-0 w-[15px] h-[15px] rounded-full bg-[#1a8fd6] border border-white text-white text-[11px] font-bold leading-[13px] text-center">i</div>
        </div>
      </div>
      <div className="flex items-center ml-[14px] shrink-0">
        <svg viewBox="0 0 18 10" className="w-[18px] h-[10px]" fill="none" stroke="#111" strokeWidth="1.2">
          <path d="M0 10 9 1l9 9" />
        </svg>
        <svg viewBox="0 0 24 20" className="w-[24px] h-[20px] ml-[15px]" fill="#8f8f8f" stroke="#111" strokeWidth="1.3">
          <path d="M5 19a4 4 0 0 1-1-8 7 7 0 0 1 13-2 5 5 0 0 1 2 10z" />
        </svg>
        <svg viewBox="0 0 24 14" className="w-[23px] h-[14px] ml-[13px]" fill="none" stroke="#111" strokeWidth="1.4">
          <rect x="1" y="1" width="20" height="12" />
          <rect x="3" y="3" width="9" height="8" fill="#111" stroke="none" />
          <path d="M23 5v4" />
        </svg>
        <svg viewBox="0 0 22 22" className="w-[20px] h-[20px] ml-[15px]" fill="none" stroke="#222" strokeWidth="1.2">
          <path d="M1 20C1 10 10 1 21 1M5 20C5 13 12 6 21 6M9 20c0-5 4-9 9-9M13 20c0-2 1-4 4-4" />
        </svg>
        <svg viewBox="0 0 24 24" className="w-[24px] h-[24px] ml-[13px]" fill="none" stroke="#222" strokeWidth="1.2">
          <path d="M2 9v6h4l6 6V3L6 9zM15 9c1 2 1 4 0 6M18 6c2 3 2 9 0 12M21 3c3 5 3 13 0 18" />
        </svg>
      </div>
      <div className="ml-[23px] w-[73px] flex flex-col justify-center items-center gap-[9px] text-[17px] leading-[18px] text-[#111] shrink-0">
        <span>1:40 PM</span>
        <span>3/1/2021</span>
      </div>
      <div className="ml-[31px] relative w-[38px] flex items-center shrink-0">
        <svg viewBox="0 0 26 34" className="w-[24px] h-[34px] -mt-[8px]">
          <path d="M1 1h24v24H12l-5 7v-7H1z" fill="#000" />
          <path d="M6 8h14M6 13h14M6 18h14" stroke="#fff" strokeWidth="1.4" />
        </svg>
        <div className="absolute left-[12px] top-[30px] w-[26px] h-[26px] rounded-full bg-[#c4c4c4] border border-[#666] flex items-center justify-center text-[16px] font-semibold text-black">9</div>
      </div>
    </div>
  )
}

export default function App() {
  return (
    <div className="relative w-[1920px] h-[1080px] overflow-hidden flex flex-col bg-white">
      <ChromeBar />
      <AwsHeader />
      <div className="h-[754px] flex shrink-0 font-['Noto_Sans',sans-serif] overflow-hidden">
        <Sidebar />
        <div className="w-[1560px] h-full flex flex-col">
          <TopPane />
          <DetailPane />
        </div>
      </div>
      <AwsFooter />
      <Taskbar />
      <PuttyDialog />
    </div>
  )
}
